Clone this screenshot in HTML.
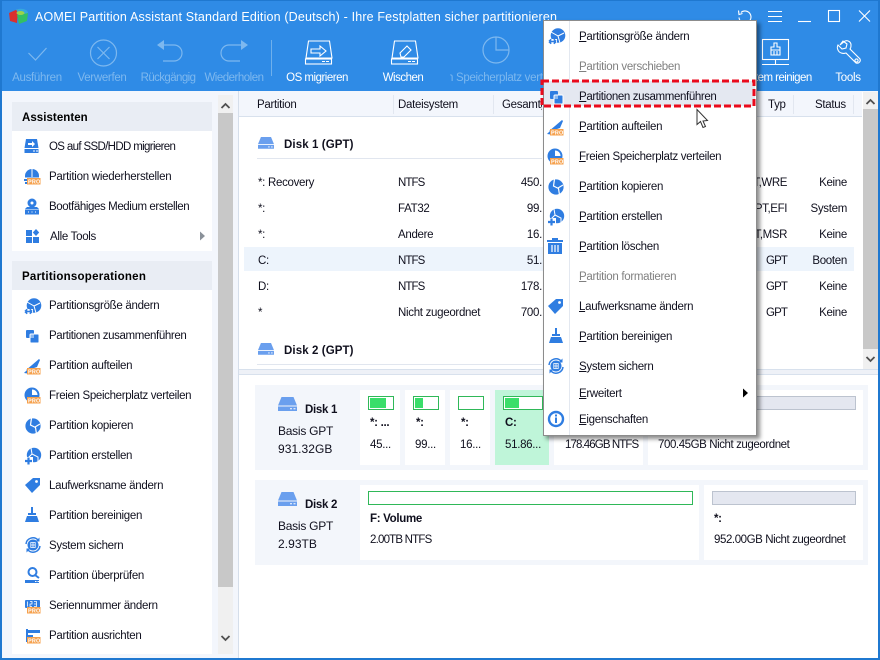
<!DOCTYPE html>
<html lang="de"><head><meta charset="utf-8"><title>AOMEI Partition Assistant</title>
<style>
html,body{margin:0;padding:0}
body{width:880px;height:660px;position:relative;overflow:hidden;background:#f3f6fc;font:11.5px/18px "Liberation Sans",sans-serif;letter-spacing:-.3px;color:#10101e}
div{position:absolute;white-space:nowrap}
.b{font-weight:bold}
.tb{text-align:center;color:#fff;font-size:11.5px;top:69px;letter-spacing:-.3px}
.off{color:#7db8ef}
.r{text-align:right}
.n{letter-spacing:-.9px}
svg{position:absolute;overflow:visible}
.pro{font:bold 5.5px "Liberation Sans",sans-serif;letter-spacing:.2px;fill:#fff}
u{text-underline-offset:1px}
</style></head><body>
<svg width="0" height="0"><defs>
<g id="badge"><rect x="3" y="10" width="13.500" height="6.500" fill="#f5a04c"/><text x="4" y="15.500" class="pro">PRO</text></g>
<g id="resize"><circle cx="10" cy="7.500" r="7.300" fill="#2f7de1"/><path d="M3 4l7 4 2 7M10 8l6-3" stroke="#fff" stroke-width="1" fill="none"/><path d="M0 11h9v5H0z" fill="#fff"/><path d="M1 13.500h7M1 13.500l2.200-2.200M1 13.500l2.200 2.200M8 13.500l-2.200-2.200M8 13.500l-2.200 2.200" stroke="#2f7de1" stroke-width="1.600" fill="none"/></g>
<g id="merge"><rect x="3" y="3" width="8" height="8" rx="1" fill="#2f7de1"/><rect x="7" y="7" width="9" height="9" rx="1" fill="#2f7de1" stroke="#fff"/><rect x="7.500" y="7.500" width="3.500" height="3.500" fill="#8db9f0"/></g>
<g id="split"><path d="M2 12L8 7 15 1l1 1-3 7-3 1z" fill="#2f7de1"/><path d="M0 15l5-5 3 2-1 4z" fill="#2f7de1"/><use href="#badge"/></g>
<g id="free"><circle cx="8" cy="8" r="7.500" fill="#2f7de1"/><path d="M8 2.500a5.500 5.500 0 0 1 5.500 5.500H8z" fill="#fff"/><use href="#badge"/></g>
<g id="copy"><circle cx="9" cy="9" r="7.600" fill="#2f7de1"/><path d="M7.500 1l-1 7 5 2.500 1 6.500M16 7l-5 3" stroke="#fff" stroke-width="1.200" fill="none"/></g>
<g id="new"><circle cx="10" cy="8" r="7.200" fill="#2f7de1"/><path d="M7 1l1 6 6 3 0 5M8 7l-4 4" stroke="#fff" stroke-width="1" fill="none"/><path d="M0 10h9v8H0z" fill="#fff"/><path d="M1 14h7M4.500 10.500v7" stroke="#2f7de1" stroke-width="2.200"/></g>
<g id="tag"><path d="M1 9l8-7h7v7l-8 8z" fill="#2f7de1"/><circle cx="12.500" cy="5.500" r="1.400" fill="#fff"/></g>
<g id="broom"><path d="M8 1h2v6h3v2H5V7h3z" fill="#2f7de1"/><path d="M4 10h10l2 6H2z" fill="#2f7de1"/></g>
<g id="backup"><circle cx="9" cy="9" r="5.500" fill="#2f7de1"/><path d="M6.800 6.500h4.400v5H6.800zM9 6.500v5M6.800 9h4.400" stroke="#fff" stroke-width=".8" fill="none"/><path d="M2 8a7 7 0 0 1 12-4M16 10a7 7 0 0 1-12 4" stroke="#2f7de1" stroke-width="1.500" fill="none"/><path d="M15.500 1.500v4h-4zM2.500 16.500v-4h4z" fill="#2f7de1"/></g>
<g id="trash"><path d="M6 1h6v2h5v2H1V3h5zM2 6h14v11H2z" fill="#2f7de1"/><path d="M6 8v7M9 8v7M12 8v7" stroke="#fff" stroke-width="1.200"/></g>
<g id="info"><circle cx="9" cy="9" r="7" fill="#fff" stroke="#2f7de1" stroke-width="2.400"/><path d="M8 7.500h2V13H8zM8 4.500h2v2H8z" fill="#2f7de1"/></g>
<g id="hdd"><path d="M3.500 0h12L19 8.500H0z" fill="#6a9fee"/><rect y="9.500" width="19" height="4.500" fill="#6a9fee"/><path d="M12 11.800h2M15.500 11.800h2" stroke="#fff"/></g>
</defs></svg>

<!-- window -->
<div style="left:0;top:0;width:880px;height:91px;background:#2f8be6;border-top:1px solid #1f78d0;box-sizing:border-box"></div>
<div style="left:0;top:0;width:2px;height:660px;background:#1f78d0"></div>
<div style="right:0;top:0;width:2px;height:660px;background:#1f78d0"></div>
<div style="left:0;top:658px;width:880px;height:2px;background:#1f78d0"></div>

<svg style="left:8px;top:7px" width="22" height="18"><path d="M10 2L1 6l1 8 7 2 .5-7z" fill="#d9302f"/><path d="M9 8l11-2-1 8-8 3z" fill="#33c064"/><path d="M8 2.500c6-2 12 0 12 3.500L11 8z" fill="#36a9dc"/><ellipse cx="12.500" cy="6" rx="4" ry="2" fill="#9bd44a"/></svg>
<div style="left:35px;top:9px;color:#fff;font-size:12.500px;letter-spacing:.16px;line-height:16px">AOMEI Partition Assistant Standard Edition (Deutsch) - Ihre Festplatten sicher partitionieren</div>

<!-- window controls -->
<svg style="left:736px;top:8px" width="140" height="18" fill="none" stroke="#fff" stroke-width="1.100">
<path d="M5 4.500A6 6 0 1 1 3 9.500"/><path d="M2.500 2.500l.5 4 3.500-1"/>
<path d="M32 3.500h14M32 8.500h14M32 13.500h14"/><path d="M62 13.500h13"/><rect x="92.500" y="2.500" width="11" height="11"/><path d="M123 2.500l11 11M134 2.500l-11 11"/></svg>

<!-- toolbar -->
<svg style="left:0;top:36px" width="880" height="36" fill="none" stroke="#7db8ef" stroke-width="1.200">
<path d="M28.500 17l7 7 11-12"/>
<circle cx="103.500" cy="17" r="13"/><path d="M97.500 11l12 12M109.500 11l-12 12"/>
<path d="M158 9h16a8 8 0 0 1 0 16h-11"/><path d="M164 4l-7 5 7 5z" fill="#7db8ef" stroke="none"/>
<path d="M241 9h-12a8 8 0 0 0 0 16h11"/><path d="M241 4l7 5-7 5z" fill="#7db8ef" stroke="none"/>
<path d="M271.500 4v36" stroke="#6fb0ec" stroke-width="1"/>
<circle cx="496" cy="14" r="13"/><path d="M496 1v13h13"/>
</svg>
<svg style="left:0;top:36px" width="880" height="36" fill="none" stroke="#fff" stroke-width="1.100">
<path d="M308.500 5h21l2.500 17h-26z"/><rect x="305.500" y="23" width="26" height="5"/><path d="M311 13h9v-3l6 5-6 5v-3h-9z"/><path d="M322 25.500h3M326 25.500h3"/>
<path d="M394.500 5h21l2.500 17h-26z"/><rect x="391.500" y="23" width="26" height="5"/><path d="M400 17l7-7 4 4-7 7h-3z"/><path d="M408 25.500h3M412 25.500h3"/>
<rect x="762.500" y="3.500" width="26" height="20"/><path d="M775.500 24v4M762 28.500h27"/><path d="M774 7h3v4h3v3h-9v-3h3zM771 14h9v5h-9zM774 15v4M777 15v4"/>
<path d="M839 9l5-4c3-1 6 1 6 4 0 2 0 3-1 4l10 10c1 2-1 5-4 4L845 17c-3 1-7 0-8-3-1-2-1-3 0-5l4 4 4-1 1-4-4-3z" transform="translate(1,0)"/><circle cx="856.500" cy="24.500" r="1.600"/>
</svg>
<div class="tb off" style="left:2px;width:70px">Ausführen</div>
<div class="tb off" style="left:67px;width:70px">Verwerfen</div>
<div class="tb off" style="left:133px;width:70px;letter-spacing:-.6px">Rückgängig</div>
<div class="tb off" style="left:199px;width:70px;letter-spacing:-.5px">Wiederholen</div>
<div class="tb" style="left:277px;width:80px;letter-spacing:-.5px">OS migrieren</div>
<div class="tb" style="left:363px;width:80px;letter-spacing:-.5px">Wischen</div>
<div class="tb off" style="left:450px;width:93px;overflow:hidden;text-align:left"><span style="margin-left:-3px">n Speicherplatz verteilen</span></div>
<div class="tb" style="left:755px;text-align:left;letter-spacing:-.55px">tem reinigen</div>
<div class="tb" style="left:828px;width:40px">Tools</div>

<!-- sidebar -->
<div style="left:12px;top:102px;width:200px;height:29px;background:#e9edf4"></div>
<div style="left:12px;top:131px;width:200px;height:120px;background:#fff"></div>
<div style="left:12px;top:261px;width:200px;height:29px;background:#e9edf4"></div>
<div style="left:12px;top:290px;width:200px;height:364px;background:#fff"></div>
<div class="b" style="left:22px;top:109px;color:#000;letter-spacing:.05px">Assistenten</div>
<div class="b" style="left:22px;top:268px;color:#000;letter-spacing:.25px">Partitionsoperationen</div>

<div style="left:49px;top:138px;letter-spacing:-.65px">OS auf SSD/HDD migrieren</div>
<div style="left:49px;top:168px;letter-spacing:-.26px">Partition wiederherstellen</div>
<div style="left:49px;top:198px;letter-spacing:-.4px">Bootfähiges Medium erstellen</div>
<div style="left:50px;top:228px">Alle Tools</div>
<div style="left:49px;top:297px">Partitionsgröße ändern</div>
<div style="left:49px;top:327px;letter-spacing:-.37px">Partitionen zusammenführen</div>
<div style="left:49px;top:357px">Partition aufteilen</div>
<div style="left:49px;top:387px;letter-spacing:-.33px">Freien Speicherplatz verteilen</div>
<div style="left:49px;top:417px">Partition kopieren</div>
<div style="left:49px;top:447px">Partition erstellen</div>
<div style="left:49px;top:477px">Laufwerksname ändern</div>
<div style="left:49px;top:507px">Partition bereinigen</div>
<div style="left:49px;top:537px">System sichern</div>
<div style="left:49px;top:567px">Partition überprüfen</div>
<div style="left:49px;top:597px">Seriennummer ändern</div>
<div style="left:49px;top:627px">Partition ausrichten</div>

<svg style="left:0;top:0" width="240" height="660">
<g fill="#2f7de1">
<g transform="translate(24,139)"><path d="M2 0h11l1.500 9H.5z"/><rect x=".5" y="10" width="14" height="4"/><path d="M4 4h4V2l3 3-3 3V6H4z" fill="#fff"/><path d="M9 12h2M12 12h2" stroke="#fff"/></g>
<g transform="translate(24,168)"><path d="M8 1a7 7 0 0 1 7 7v2H1V8a7 7 0 0 1 7-7z"/><path d="M8 1v8M0 10h16" stroke="#fff"/><path d="M0 11h3v2H0zM1 14h2v2H1z"/><use href="#badge"/></g>
<g transform="translate(24,198)"><circle cx="8" cy="5" r="4.500"/><circle cx="8" cy="5" r="1.500" fill="#fff"/><path d="M3 9h10l2 2H1z"/><rect x="1" y="11.500" width="14" height="5"/><path d="M4 14h1M7.500 14h1M11 14h1" stroke="#fff"/></g>
<g transform="translate(26,229)"><rect y="1" width="6" height="6"/><rect y="8" width="6" height="6"/><rect x="7" y="8" width="6" height="6"/><path d="M10 0l3.200 3.500-3.200 3.500-3.200-3.500z"/></g>
</g>
<use href="#resize" x="24" y="298"/><use href="#merge" x="23" y="327"/><use href="#split" x="24" y="358"/><use href="#free" x="24" y="387"/><use href="#copy" x="24" y="417"/><use href="#new" x="24" y="447"/><use href="#tag" x="24" y="476"/><use href="#broom" x="23" y="506"/><use href="#backup" x="24" y="536"/>
<g fill="#2f7de1"><g transform="translate(25,567)"><circle cx="7.500" cy="5" r="4" fill="none" stroke="#2f7de1" stroke-width="2"/><path d="M10 8l4 3" stroke="#2f7de1" stroke-width="2"/><rect y="13" width="14" height="3"/><path d="M10 14.500h1.500M12.500 14.500h1.500" stroke="#fff"/></g>
<g transform="translate(25,597)"><rect y="3" width="15" height="8" rx="1"/><path d="M2.500 4.500v5M5 4.500h2v2.500H5v2.500h2M9 4.500h2.500v5H9M9 7h2.500" stroke="#fff" fill="none" stroke-width=".8"/><use href="#badge" transform="translate(-1,0)"/></g>
<g transform="translate(25,629)"><rect x="1" y="0" width="2" height="13"/><rect x="3" y="1" width="12" height="3"/><rect x="3" y="6" width="5" height="3"/><use href="#badge" transform="translate(-1,-2)"/></g></g>
<path d="M200 231.500l5 4.500-5 4.500z" fill="#8a9199"/>
</svg>

<!-- sidebar scrollbar -->
<div style="left:218px;top:95px;width:15px;height:559px;background:#f0f0f0"></div>
<div style="left:218px;top:113px;width:15px;height:474px;background:#c8c8c8"></div>
<svg style="left:218px;top:95px" width="15" height="559" fill="none" stroke="#505050" stroke-width="1.800"><path d="M3.500 13l4-4 4 4M3.500 541l4 4 4-4"/></svg>
<div style="left:238px;top:91px;width:1px;height:567px;background:#d5deea"></div>

<!-- table -->
<div style="left:239px;top:92px;width:639px;height:566px;background:#fff"></div>
<div style="left:239px;top:92px;width:623px;height:24px;background:#f3f6fc;border-bottom:1px solid #d8e1ed"></div>
<div style="left:257px;top:96px">Partition</div>
<div style="left:398px;top:96px">Dateisystem</div>
<div style="left:502px;top:96px;width:40px;overflow:hidden">Gesamtgröße</div>
<div style="left:768px;top:96px">Typ</div>
<div style="left:815px;top:96px">Status</div>
<div style="left:393px;top:95px;width:1px;height:19px;background:#e2e7f0"></div>
<div style="left:493px;top:95px;width:1px;height:19px;background:#e2e7f0"></div>
<div style="left:793px;top:95px;width:1px;height:19px;background:#e2e7f0"></div>
<div style="left:853px;top:95px;width:1px;height:19px;background:#e2e7f0"></div>

<svg style="left:258px;top:137px" width="16" height="12"><use href="#hdd" transform="scale(.84)"/></svg>
<div class="b" style="left:284px;top:136px;letter-spacing:.1px">Disk 1 (GPT)</div>
<div style="left:257px;top:158px;width:285px;height:1px;background:#e1e6ef"></div>
<div style="left:244px;top:247px;width:610px;height:24px;background:#edf4fc"></div>

<div style="left:258px;top:174px">*: Recovery</div><div class="n" style="left:398px;top:174px">NTFS</div><div class="r" style="left:502px;top:174px;width:40px">450.</div>
<div style="left:258px;top:200px">*:</div><div style="left:398px;top:200px">FAT32</div><div class="r" style="left:502px;top:200px;width:40px">99.</div>
<div style="left:258px;top:226px">*:</div><div style="left:398px;top:226px">Andere</div><div class="r" style="left:502px;top:226px;width:40px">16.</div>
<div style="left:258px;top:252px">C:</div><div class="n" style="left:398px;top:252px">NTFS</div><div class="r" style="left:502px;top:252px;width:40px">51.</div>
<div style="left:258px;top:278px">D:</div><div class="n" style="left:398px;top:278px">NTFS</div><div class="r" style="left:502px;top:278px;width:40px">178.</div>
<div style="left:258px;top:304px">*</div><div style="left:398px;top:304px">Nicht zugeordnet</div><div class="r" style="left:502px;top:304px;width:40px">700.</div>

<div class="r" style="left:740px;top:174px;width:47px;letter-spacing:-.4px">T,WRE</div><div class="r" style="left:808px;top:174px;width:39px">Keine</div>
<div class="r" style="left:740px;top:200px;width:47px;letter-spacing:-.4px">PT,EFI</div><div class="r" style="left:808px;top:200px;width:39px">System</div>
<div class="r" style="left:740px;top:226px;width:47px;letter-spacing:-.4px">T,MSR</div><div class="r" style="left:808px;top:226px;width:39px">Keine</div>
<div class="r n" style="left:740px;top:252px;width:47px">GPT</div><div class="r" style="left:808px;top:252px;width:39px">Booten</div>
<div class="r n" style="left:740px;top:278px;width:47px">GPT</div><div class="r" style="left:808px;top:278px;width:39px">Keine</div>
<div class="r n" style="left:740px;top:304px;width:47px">GPT</div><div class="r" style="left:808px;top:304px;width:39px">Keine</div>

<svg style="left:258px;top:343px" width="16" height="12"><use href="#hdd" transform="scale(.84)"/></svg>
<div class="b" style="left:284px;top:342px;letter-spacing:.1px">Disk 2 (GPT)</div>
<div style="left:257px;top:364px;width:285px;height:1px;background:#e1e6ef"></div>

<!-- table scrollbar -->
<div style="left:863px;top:92px;width:15px;height:277px;background:#f0f0f0"></div>
<div style="left:863px;top:109px;width:15px;height:240px;background:#c8c8c8"></div>
<svg style="left:863px;top:92px" width="15" height="277" fill="none" stroke="#505050" stroke-width="1.800"><path d="M3.500 12l4-4 4 4M3.500 265l4 4 4-4"/></svg>
<div style="left:239px;top:369px;width:639px;height:4px;background:#eef1f7;border-top:1px solid #d8e1ed;border-bottom:1px solid #d8e1ed"></div>

<!-- disk map -->
<div style="left:255px;top:385px;width:613px;height:85px;background:#f3f6fb"></div>
<div style="left:255px;top:480px;width:613px;height:85px;background:#f3f6fb"></div>
<svg style="left:278px;top:397px" width="19" height="14"><use href="#hdd"/></svg>
<svg style="left:278px;top:492px" width="19" height="14"><use href="#hdd"/></svg>
<div class="b" style="left:305px;top:401px">Disk 1</div>
<div style="left:278px;top:422px;font-size:12px;letter-spacing:-.25px">Basis GPT</div>
<div style="left:278px;top:440px;font-size:12px;letter-spacing:.05px">931.32GB</div>
<div class="b" style="left:305px;top:496px">Disk 2</div>
<div style="left:278px;top:517px;font-size:12px;letter-spacing:-.25px">Basis GPT</div>
<div style="left:278px;top:535px;font-size:12px;letter-spacing:.05px">2.93TB</div>

<div style="left:360px;top:390px;width:40px;height:75px;background:#fff"></div>
<div style="left:405px;top:390px;width:40px;height:75px;background:#fff"></div>
<div style="left:450px;top:390px;width:40px;height:75px;background:#fff"></div>
<div style="left:495px;top:390px;width:54px;height:75px;background:#bff5d9"></div>
<div style="left:554px;top:390px;width:89px;height:75px;background:#fff"></div>
<div style="left:648px;top:390px;width:215px;height:75px;background:#fff"></div>
<div style="left:360px;top:485px;width:339px;height:75px;background:#fff"></div>
<div style="left:704px;top:485px;width:159px;height:75px;background:#fff"></div>

<div style="left:368px;top:396px;width:24px;height:12px;border:1px solid #2fb858;background:#fff"></div><div style="left:370px;top:398px;width:16px;height:10px;background:#3ade6a"></div>
<div style="left:413px;top:396px;width:24px;height:12px;border:1px solid #2fb858;background:#fff"></div><div style="left:415px;top:398px;width:8px;height:10px;background:#3ade6a"></div>
<div style="left:458px;top:396px;width:24px;height:12px;border:1px solid #2fb858;background:#fff"></div>
<div style="left:503px;top:396px;width:38px;height:12px;border:1px solid #2fb858;background:#fff"></div><div style="left:505px;top:398px;width:14px;height:10px;background:#3ade6a"></div>
<div style="left:562px;top:396px;width:71px;height:12px;border:1px solid #2fb858;background:#fff"></div>
<div style="left:656px;top:396px;width:198px;height:12px;border:1px solid #bcc3cf;background:#e4e7f0"></div>
<div style="left:368px;top:491px;width:323px;height:12px;border:1px solid #2fb858;background:#fff"></div>
<div style="left:712px;top:491px;width:142px;height:12px;border:1px solid #bcc3cf;background:#e4e7f0"></div>

<div class="b" style="left:370px;top:414px">*: ...</div><div style="left:370px;top:436px">45...</div>
<div class="b" style="left:416px;top:414px">*:</div><div style="left:415px;top:436px">99...</div>
<div class="b" style="left:461px;top:414px">*:</div><div style="left:460px;top:436px">16...</div>
<div class="b" style="left:505px;top:414px">C:</div><div style="left:505px;top:436px">51.86...</div>
<div style="left:565px;top:436px;letter-spacing:-.9px">178.46GB NTFS</div>
<div style="left:658px;top:436px;letter-spacing:-.42px">700.45GB Nicht zugeordnet</div>
<div class="b" style="left:370px;top:510px">F: Volume</div><div style="left:370px;top:531px;letter-spacing:-.8px">2.00TB NTFS</div>
<div class="b" style="left:714px;top:510px">*:</div><div style="left:714px;top:531px;letter-spacing:-.42px">952.00GB Nicht zugeordnet</div>

<!-- context menu -->
<div style="left:543px;top:20px;width:212px;height:414px;background:#fff;border:1px solid #8c8c8c;box-shadow:3px 3px 4px rgba(0,0,0,.45)"></div>
<div style="left:569px;top:21px;width:1px;height:414px;background:#e3e8f0"></div>
<div style="left:544px;top:81px;width:211px;height:25px;background:#e4e8f1"></div>
<div style="left:579px;top:28px"><u>P</u>artitionsgröße ändern</div>
<div style="left:579px;top:58px;color:#808080"><u>P</u>artition verschieben</div>
<div style="left:579px;top:88px;letter-spacing:-.37px"><u>P</u>artitionen zusammenführen</div>
<div style="left:579px;top:118px"><u>P</u>artition aufteilen</div>
<div style="left:579px;top:148px;letter-spacing:-.33px"><u>F</u>reien Speicherplatz verteilen</div>
<div style="left:579px;top:178px"><u>P</u>artition kopieren</div>
<div style="left:579px;top:208px"><u>P</u>artition erstellen</div>
<div style="left:579px;top:238px"><u>P</u>artition löschen</div>
<div style="left:579px;top:268px;color:#808080"><u>P</u>artition formatieren</div>
<div style="left:579px;top:298px"><u>L</u>aufwerksname ändern</div>
<div style="left:579px;top:328px"><u>P</u>artition bereinigen</div>
<div style="left:579px;top:358px"><u>S</u>ystem sichern</div>
<div style="left:579px;top:385px"><u>E</u>rweitert</div>
<div style="left:579px;top:411px"><u>E</u>igenschaften</div>
<svg style="left:0;top:0" width="880" height="660">
<use href="#resize" x="548" y="28"/><use href="#merge" x="547" y="88"/><use href="#split" x="547" y="119"/><use href="#free" x="547" y="148"/><use href="#copy" x="547" y="178"/><use href="#new" x="547" y="208"/><use href="#trash" x="546" y="237"/><use href="#tag" x="547" y="297"/><use href="#broom" x="547" y="327"/><use href="#backup" x="547" y="357"/><use href="#info" x="547" y="410"/>
<path d="M743 388.500l5 4.500-5 4.500z" fill="#000"/>
<rect x="542" y="81" width="212" height="25" fill="none" stroke="#ea0a1c" stroke-width="3" stroke-dasharray="7 3"/>
<path d="M697 109.500v15l3.500-3 2.500 6 2.500-1-2.500-5.500 4.500-.5z" fill="#fff" stroke="#333" stroke-width="1"/>
</svg>
</body></html>
